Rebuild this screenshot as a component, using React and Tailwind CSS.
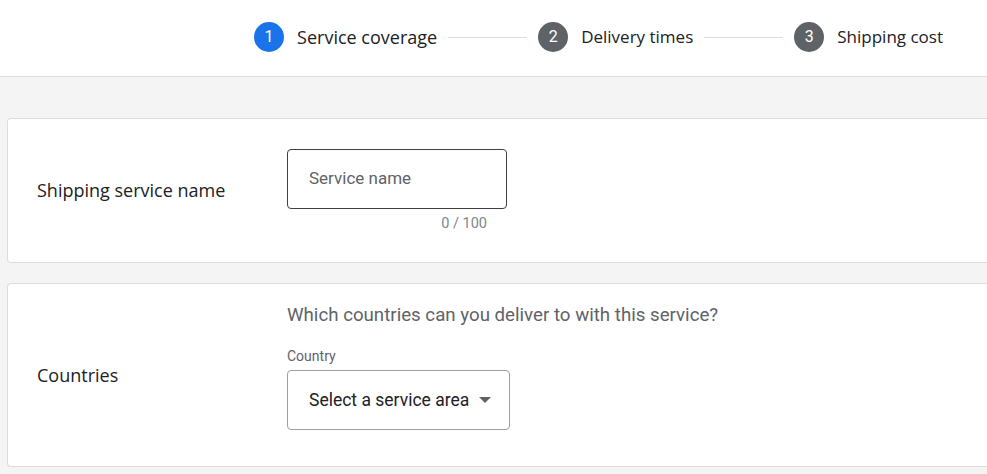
import React from 'react'

const steps = [
  { n: 1, label: 'Service coverage', active: true },
  { n: 2, label: 'Delivery times' },
  { n: 3, label: 'Shipping cost' },
]

function Stepper() {
  return (
    <div className="flex items-center justify-end pr-[44px] pb-[2px] h-[77px] bg-white border-b border-[#dadce0]">
      {steps.map((s, i) => (
        <div key={s.n} className="flex items-center">
          {i > 0 && <div className="w-[79px] h-px bg-[#dadce0] mx-[11px]"></div>}
          <div
            className={
              'w-[30px] h-[30px] rounded-full flex items-center justify-center text-white text-[16px] ' +
              (s.active ? 'bg-[#1a73e8]' : 'bg-[#5f6368]')
            }
            style={{ fontFamily: 'Roboto, sans-serif' }}
          >
            {s.n}
          </div>
          <span
            className={'ml-[13px] text-[#202124] ' + (s.active ? 'text-[18px] font-medium' : 'text-[17px]')}
            style={{ fontFamily: '"Open Sans", sans-serif' }}
          >
            {s.label}
          </span>
        </div>
      ))}
    </div>
  )
}

export default function App() {
  return (
    <div className="w-[987px] h-[474px] overflow-hidden bg-[#f4f4f4]" style={{ fontFamily: 'Roboto, sans-serif' }}>
      <Stepper />
      <div className="pl-[7px] pt-[41px] flex flex-col gap-[20px]">
        <div className="bg-white border border-[#dadce0] border-r-0 rounded-l-[4px] flex h-[145px]">
          <div
            className="w-[279px] pl-[29px] flex items-center text-[18px] text-[#202124] font-medium"
            style={{ fontFamily: '"Open Sans", sans-serif' }}
          >
            Shipping service name
          </div>
          <div className="pt-[30px]">
            <div className="w-[220px] h-[60px] border border-[#3c4043] rounded-[4px] flex items-center px-[21px] text-[17px] text-[#5f6368]">
              Service name
            </div>
            <div className="w-[220px] text-right pr-[20px] pt-[4px] text-[14.5px] text-[#80868b]">0 / 100</div>
          </div>
        </div>
        <div className="bg-white border border-[#dadce0] border-r-0 rounded-l-[4px] flex h-[184px]">
          <div
            className="w-[279px] pl-[29px] flex items-center text-[18px] text-[#202124] font-medium"
            style={{ fontFamily: '"Open Sans", sans-serif' }}
          >
            Countries
          </div>
          <div className="pt-[19px]">
            <div className="text-[18.7px] text-[#5f6368] leading-[24px]">
              Which countries can you deliver to with this service?
            </div>
            <div className="mt-[20px] text-[14px] text-[#5f6368] leading-[18px]">Country</div>
            <div className="mt-[5px] w-[223px] h-[60px] border border-[#9aa0a6] rounded-[4px] flex items-center pl-[21px] text-[17.5px] text-[#202124]">
              Select a service area
              <span className="ml-[10px] w-0 h-0 border-l-[6px] border-r-[6px] border-t-[6px] border-l-transparent border-r-transparent border-t-[#5f6368]"></span>
            </div>
          </div>
        </div>
      </div>
    </div>
  )
}
